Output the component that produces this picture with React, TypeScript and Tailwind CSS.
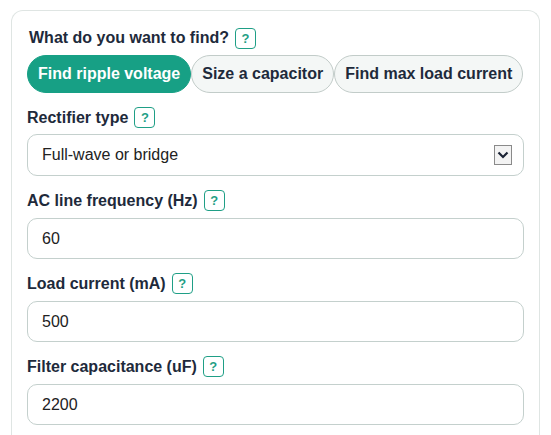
import React from "react";

const font = { fontFamily: '"Liberation Sans", Arial, sans-serif' };

function Help() {
  return (
    <span className="ml-1.5 inline-flex h-[21px] w-[21px] shrink-0 items-center justify-center rounded-[4px] border-[1.5px] border-[#1f9f86] bg-white text-[13px] font-bold leading-none text-[#1f9f86]">
      ?
    </span>
  );
}

function Label({ children }: { children: React.ReactNode }) {
  return (
    <div className="flex h-[21px] items-center text-[16px] font-bold text-[#1e2a3b]">
      <span>{children}</span>
      <Help />
    </div>
  );
}

function Field({ label, value }: { label: string; value: string }) {
  return (
    <div className="mt-[14px]">
      <Label>{label}</Label>
      <div className="mt-[7px] flex h-[41px] items-center rounded-[10px] border border-[#c4d0cd] bg-white px-[14px] text-[16px] text-[#222]">
        {value}
      </div>
    </div>
  );
}

export default function App() {
  const tabs = ["Find ripple voltage", "Size a capacitor", "Find max load current"];
  return (
    <div className="min-h-[435px] bg-white pl-[11px] pt-[10px]" style={font}>
      <div className="w-[529px] rounded-t-[12px] border border-b-0 border-[#dfe5e3] bg-white px-[15px] pb-[10px] pt-[16px]">
        <div className="flex h-[22px] items-center pl-[2px] text-[16px] font-bold text-[#1e2a3b]">
          <span>What do you want to find?</span>
          <Help />
        </div>
        <div className="mt-[6px] flex">
          {tabs.map((t, i) =>
            i === 0 ? (
              <div
                key={t}
                className="flex h-[38px] shrink-0 items-center whitespace-nowrap rounded-full border border-[#17a085] bg-[#17a085] px-[10px] text-[16px] font-bold text-white"
              >
                {t}
              </div>
            ) : (
              <div
                key={t}
                className="flex h-[38px] shrink-0 items-center whitespace-nowrap rounded-full border border-[#c2ccc9] bg-[#f4f7f6] px-[10px] text-[16px] font-bold text-[#1e2a3b]"
              >
                {t}
              </div>
            )
          )}
        </div>
        <div className="mt-[14px]">
          <Label>Rectifier type</Label>
          <div className="mt-[6px] flex h-[42px] items-center justify-between rounded-[10px] border border-[#c4d0cd] bg-white pl-[14px] pr-[11px] text-[16px] text-[#222]">
            <span>Full-wave or bridge</span>
            <span className="flex h-[20px] w-[18px] items-center justify-center border border-[#8a8a8a] bg-[#f3f3f3]">
              <svg width="12" height="8" viewBox="0 0 12 8">
                <path d="M1.5 1.5 L6 6 L10.5 1.5" fill="none" stroke="#1b2335" strokeWidth="2.2" />
              </svg>
            </span>
          </div>
        </div>
        <Field label="AC line frequency (Hz)" value="60" />
        <Field label="Load current (mA)" value="500" />
        <Field label="Filter capacitance (uF)" value="2200" />
      </div>
    </div>
  );
}
